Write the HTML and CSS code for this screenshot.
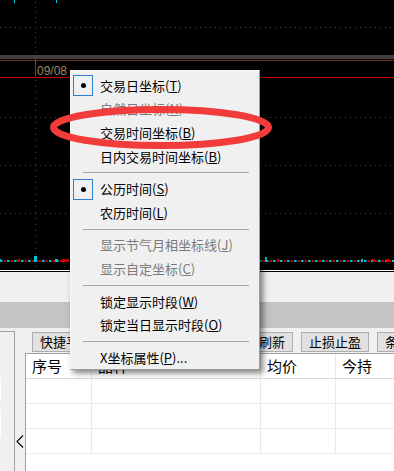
FILE: index.html
```html
<!DOCTYPE html>
<html lang="zh-CN">
<head>
<meta charset="utf-8">
<link rel="stylesheet" href="styles.css">
</head>
<body>
<div class="screen">
  <div class="chart">
    <svg width="394" height="272" viewBox="0 0 394 272">
      <rect x="0" y="0" width="394" height="272" fill="#000"/>
      <rect x="14" y="0" width="1" height="3" fill="#00c8f0"/>
      <rect x="56" y="0" width="1" height="3" fill="#00c8f0"/>
      <line x1="0" y1="27.5" x2="394" y2="27.5" stroke="#5e4a40" stroke-dasharray="1 4"/>
      <line x1="35.5" y1="2" x2="35.5" y2="53" stroke="#5e4a40" stroke-dasharray="1 4"/>
      <rect x="0" y="55" width="394" height="4" fill="#404040"/>
      <line x1="0" y1="60.5" x2="394" y2="60.5" stroke="#6b301c"/>
      <line x1="35.5" y1="59" x2="35.5" y2="76" stroke="#6b4a30"/>
      <text x="37" y="75" class="axis-label">09/08</text>
      <line x1="0" y1="77.5" x2="394" y2="77.5" stroke="#d00000"/>
      <line x1="0" y1="117.5" x2="394" y2="117.5" stroke="#5e4038" stroke-dasharray="1 4"/>
      <line x1="0" y1="165.5" x2="394" y2="165.5" stroke="#5e4038" stroke-dasharray="1 4"/>
      <line x1="0" y1="213.5" x2="394" y2="213.5" stroke="#5e4038" stroke-dasharray="1 4"/>
      <line x1="35.5" y1="80" x2="35.5" y2="269" stroke="#5e4a40" stroke-dasharray="1 5"/>
      <line x1="0" y1="261" x2="394" y2="261" stroke="#00c4dc" stroke-width="2" stroke-dasharray="2.5 4.5"/>
      <line x1="0" y1="261" x2="394" y2="261" stroke="#c40000" stroke-width="2" stroke-dasharray="2.5 4.5" stroke-dashoffset="-3.5"/>
      <rect x="34" y="256" width="3" height="6" fill="#00c4dc"/>
      <rect x="0" y="259" width="1" height="3" fill="#00c4dc"/>
      <rect x="17" y="259" width="3" height="3" fill="#c40000"/>
      <rect x="55" y="259" width="3" height="3" fill="#00c4dc"/>
      <rect x="62" y="259" width="3" height="3" fill="#c40000"/>
      <rect x="66" y="259" width="3" height="3" fill="#c40000"/>
      <rect x="265" y="257" width="2" height="5" fill="#00c4dc"/>
      <rect x="277" y="259" width="3" height="2" fill="#c40000"/>
      <rect x="361" y="259" width="2" height="3" fill="#00c4dc"/>
      <rect x="372" y="259" width="3" height="2" fill="#c40000"/>
      <rect x="386" y="259" width="3" height="3" fill="#c40000"/>
      <rect x="0" y="270" width="394" height="1" fill="#ffffff"/>
    </svg>
  </div>
  <div class="band-light"></div>
  <div class="band-gray"></div>
  <div class="lower">
    <div class="side">
      <span class="mark"></span>
      <span class="mark tall"></span>
    </div>
    <div class="collapse">
      <svg class="chev" width="8" height="13" viewBox="0 0 8 13"><polyline points="7,0.5 1,6.5 7,12.5" fill="none" stroke="#000" stroke-width="1.1"/></svg>
    </div>
    <div class="content">
      <div class="toolbar">
        <span class="btn">快捷平仓</span>
        <span class="btn">快捷反手</span>
        <span class="btn btn-cancel">全撤</span>
        <span class="btn">刷新</span>
        <span class="btn">止损止盈</span>
        <span class="btn">条件单</span>
      </div>
      <div class="table">
        <div class="row head">
          <div class="cell c1">序号</div>
          <div class="cell c2">品种</div>
          <div class="cell c3">均价</div>
          <div class="cell c4">今持</div>
        </div>
        <div class="row">
          <div class="cell c1"></div><div class="cell c2"></div><div class="cell c3"></div><div class="cell c4"></div>
        </div>
        <div class="row">
          <div class="cell c1"></div><div class="cell c2"></div><div class="cell c3"></div><div class="cell c4"></div>
        </div>
        <div class="row">
          <div class="cell c1"></div><div class="cell c2"></div><div class="cell c3"></div><div class="cell c4"></div>
        </div>
      </div>
    </div>
  </div>

  <div class="menu">
    <div class="item"><span class="radio on"></span><span>交易日坐标(<u>T</u>)</span></div>
    <div class="item disabled"><span class="radio"></span><span>自然日坐标(<u>N</u>)</span></div>
    <div class="item"><span class="radio"></span><span>交易时间坐标(<u>B</u>)</span></div>
    <div class="item"><span class="radio"></span><span>日内交易时间坐标(<u>B</u>)</span></div>
    <div class="sep"></div>
    <div class="item"><span class="radio on"></span><span>公历时间(<u>S</u>)</span></div>
    <div class="item"><span class="radio"></span><span>农历时间(<u>L</u>)</span></div>
    <div class="sep"></div>
    <div class="item disabled"><span class="radio"></span><span>显示节气月相坐标线(<u>J</u>)</span></div>
    <div class="item disabled"><span class="radio"></span><span>显示自定坐标(<u>C</u>)</span></div>
    <div class="sep"></div>
    <div class="item"><span class="radio"></span><span>锁定显示时段(<u>W</u>)</span></div>
    <div class="item"><span class="radio"></span><span>锁定当日显示时段(<u>O</u>)</span></div>
    <div class="sep"></div>
    <div class="item"><span class="radio"></span><span>X坐标属性(<u>P</u>)...</span></div>
  </div>

  <svg class="annot" width="394" height="471" viewBox="0 0 394 471">
    <ellipse cx="161" cy="127.5" rx="107.5" ry="18" fill="none" stroke="#f23c3c" stroke-width="7"/>
  </svg>
</div>
</body>
</html>
```
FILE: styles.css
```css
* { box-sizing: border-box; }
html, body { margin: 0; padding: 0; }
body {
  width: 394px;
  height: 471px;
  overflow: hidden;
  background: #f0f0f0;
  font-family: "Noto Sans CJK SC", "Microsoft YaHei", sans-serif;
  color: #000;
}
.screen {
  position: relative;
  width: 394px;
  height: 471px;
  overflow: hidden;
}
.chart { height: 272px; }
.chart svg { display: block; }
.axis-label {
  font-family: "Liberation Sans", Arial, sans-serif;
  font-size: 12px;
  fill: #a08660;
}
.band-light { height: 30px; background: #f0f0f0; }
.band-gray { height: 26px; background: #c4c4c4; }

.lower {
  display: flex;
  height: 143px;
  background: #f0f0f0;
}
.side {
  flex: none;
  width: 15px;
  margin-top: 3px;
  border-top: 1px solid #a0a0a0;
  border-right: 1px solid #a0a0a0;
  display: flex;
  flex-direction: column;
  gap: 8px;
  padding-top: 45px;
}
.mark { display: block; width: 1px; height: 25px; background: #fff; }
.mark.tall { height: 27px; }
.collapse {
  flex: none;
  width: 10px;
  padding-top: 107px;
  padding-left: 1px;
}
.chev { display: block; }
.content {
  flex: 1;
  min-width: 0;
  display: flex;
  flex-direction: column;
  padding-top: 4px;
}
.toolbar {
  display: flex;
  gap: 8px;
  height: 20px;
  padding-left: 7px;
  white-space: nowrap;
  overflow: hidden;
}
.btn {
  flex: none;
  display: block;
  height: 20px;
  padding: 0 7px;
  border: 1px solid #adadad;
  background: #e1e1e1;
  font-size: 13px;
  line-height: 17px;
}
.btn-cancel {
  width: 59px;
  text-align: center;
}
.table {
  flex: 1;
  margin-top: 1px;
  border-top: 1px solid #a0a0a0;
  border-left: 1px solid #a0a0a0;
  background: #fff;
}
.row {
  display: flex;
  height: 25px;
  border-bottom: 1px solid #ebebeb;
}
.row.head { border-bottom-color: #d9d9d9; }
.cell {
  flex: none;
  height: 100%;
  border-right: 1px solid #e8e8e8;
  padding-left: 6px;
  font-size: 15px;
  line-height: 24px;
  white-space: nowrap;
}
.c1 { width: 66px; }
.c2 { width: 169px; }
.c3 { width: 75px; }
.c4 { width: 75px; }

.menu {
  position: absolute;
  left: 70px;
  top: 70px;
  width: 190px;
  height: 300px;
  background: #f0f0f0;
  border: 1px solid;
  border-color: #f7f7f7 #9c9c9c #9c9c9c #f7f7f7;
  box-shadow: 3px 3px 6px rgba(0, 0, 0, 0.5);
  padding-top: 3px;
  font-size: 13px;
}
.item {
  display: flex;
  align-items: center;
  height: 23.6px;
  padding-left: 2px;
  white-space: nowrap;
  line-height: 18px;
}
.item.disabled { color: #7a7a7a; }
.item u { text-underline-offset: 1px; }
.radio {
  flex: none;
  width: 20px;
  height: 21px;
  margin-right: 7px;
  display: flex;
  align-items: center;
  justify-content: center;
}
.radio.on { border: 1px solid #2a7fd6; }
.radio.on::after {
  content: "";
  width: 5px;
  height: 5px;
  border-radius: 50%;
  background: #000;
}
.sep {
  height: 9px;
  display: flex;
  align-items: center;
  padding: 0 10px 0 12px;
}
.sep::before {
  content: "";
  flex: 1;
  height: 1px;
  background: #a6a6a6;
}
.annot {
  position: absolute;
  left: 0;
  top: 0;
  pointer-events: none;
}
```
